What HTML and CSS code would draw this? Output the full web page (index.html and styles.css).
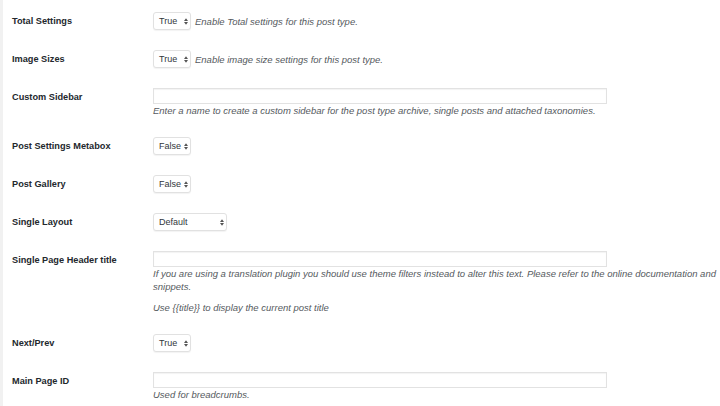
FILE: index.html
```html
<!DOCTYPE html>
<html lang="en">
<head>
<meta charset="utf-8">
<title>Post Type Settings</title>
<link rel="stylesheet" href="styles.css">
</head>
<body>
<div class="page">
  <div class="form">
    <div class="row">
      <div class="label">Total Settings</div>
      <div class="field inline">
        <div class="select sel-bool"><span>True</span><svg class="arrows" viewBox="0 0 5 8" width="5" height="8"><path d="M0 3.4 L2.5 0 L5 3.4Z M0 4.6 L2.5 8 L5 4.6Z"/></svg></div>
        <span class="desc">Enable Total settings for this post type.</span>
      </div>
    </div>
    <div class="row">
      <div class="label">Image Sizes</div>
      <div class="field inline">
        <div class="select sel-bool"><span>True</span><svg class="arrows" viewBox="0 0 5 8" width="5" height="8"><path d="M0 3.4 L2.5 0 L5 3.4Z M0 4.6 L2.5 8 L5 4.6Z"/></svg></div>
        <span class="desc">Enable image size settings for this post type.</span>
      </div>
    </div>
    <div class="row">
      <div class="label">Custom Sidebar</div>
      <div class="field">
        <div class="text-input"></div>
        <p class="desc">Enter a name to create a custom sidebar for the post type archive, single posts and attached taxonomies.</p>
      </div>
    </div>
    <div class="row">
      <div class="label">Post Settings Metabox</div>
      <div class="field inline">
        <div class="select sel-bool"><span>False</span><svg class="arrows" viewBox="0 0 5 8" width="5" height="8"><path d="M0 3.4 L2.5 0 L5 3.4Z M0 4.6 L2.5 8 L5 4.6Z"/></svg></div>
      </div>
    </div>
    <div class="row">
      <div class="label">Post Gallery</div>
      <div class="field inline">
        <div class="select sel-bool"><span>False</span><svg class="arrows" viewBox="0 0 5 8" width="5" height="8"><path d="M0 3.4 L2.5 0 L5 3.4Z M0 4.6 L2.5 8 L5 4.6Z"/></svg></div>
      </div>
    </div>
    <div class="row">
      <div class="label">Single Layout</div>
      <div class="field inline">
        <div class="select sel-wide"><span>Default</span><svg class="arrows" viewBox="0 0 5 8" width="5" height="8"><path d="M0 3.4 L2.5 0 L5 3.4Z M0 4.6 L2.5 8 L5 4.6Z"/></svg></div>
      </div>
    </div>
    <div class="row">
      <div class="label">Single Page Header title</div>
      <div class="field">
        <div class="text-input"></div>
        <p class="desc wrap">If you are using a translation plugin you should use theme filters instead to alter this text. Please refer to the online documentation and snippets.</p>
        <p class="desc para">Use {{title}} to display the current post title</p>
      </div>
    </div>
    <div class="row">
      <div class="label">Next/Prev</div>
      <div class="field inline">
        <div class="select sel-bool"><span>True</span><svg class="arrows" viewBox="0 0 5 8" width="5" height="8"><path d="M0 3.4 L2.5 0 L5 3.4Z M0 4.6 L2.5 8 L5 4.6Z"/></svg></div>
      </div>
    </div>
    <div class="row">
      <div class="label">Main Page ID</div>
      <div class="field">
        <div class="text-input"></div>
        <p class="desc">Used for breadcrumbs.</p>
      </div>
    </div>
  </div>
</div>
</body>
</html>
```
FILE: styles.css
```css
html, body {
  margin: 0;
  padding: 0;
  overflow: hidden;
  background: #ffffff;
}

body {
  font-family: "Liberation Sans", Arial, sans-serif;
  color: #23282d;
}

.page {
  width: 720px;
  height: 406px;
  border-left: 3px solid #f1f1f1;
  box-sizing: border-box;
  padding-top: 2px;
  overflow: hidden;
}

.form {
  width: 800px;
}

.row {
  display: flex;
  align-items: flex-start;
  padding: 10px 0;
}

.label {
  width: 141px;
  flex: none;
  padding-left: 9px;
  font-size: 9.2px;
  font-weight: bold;
  line-height: 18px;
  color: #23282d;
}

.field {
  flex: 1;
  display: flex;
  flex-direction: column;
  align-items: flex-start;
}

.field.inline {
  flex-direction: row;
  align-items: center;
  gap: 4px;
}

.select {
  box-sizing: border-box;
  height: 18px;
  display: flex;
  align-items: center;
  justify-content: space-between;
  padding: 0 2px 0 5px;
  border: 1px solid #e1e1e1;
  border-radius: 3px;
  background: #ffffff;
  box-shadow: 0 1px 1px rgba(0, 0, 0, 0.05);
  font-size: 9px;
  color: #32373c;
}

.sel-bool {
  width: 38px;
}

.sel-wide {
  width: 74px;
}

.arrows {
  fill: #555555;
  flex: none;
  width: 4px;
  height: 7px;
}

.text-input {
  box-sizing: border-box;
  width: 454px;
  height: 16px;
  border: 1px solid #e2e2e2;
  background: #ffffff;
  box-shadow: inset 0 1px 1px rgba(0, 0, 0, 0.05);
}

.desc {
  margin: 0;
  font-size: 9.5px;
  font-style: italic;
  line-height: 13px;
  color: #555a60;
}

.desc.wrap {
  width: 572px;
}

.desc.para {
  margin-top: 8px;
}
```
